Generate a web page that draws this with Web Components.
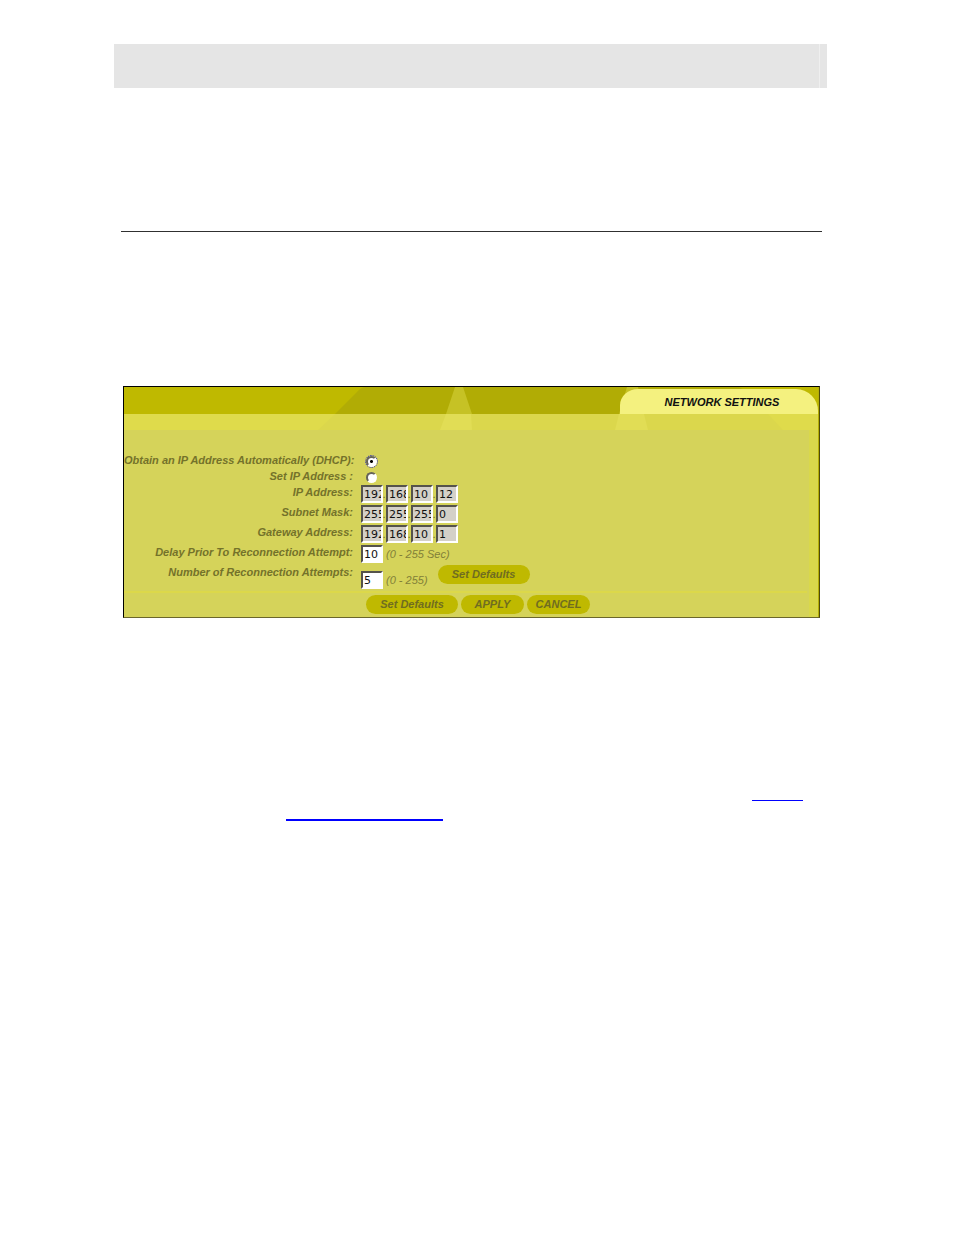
<!DOCTYPE html>
<html lang="en">
<head>
<meta charset="UTF-8">
<title>Network Settings</title>
<style>
body{margin:0;background:#fff;font-family:"Liberation Sans",Arial,sans-serif}
</style>
</head>
<body>
<manual-page>
<settings-panel heading="NETWORK SETTINGS">
<address-mode></address-mode>
<setting-row label="IP Address:" values="192.168.10.12" disabled></setting-row>
<setting-row label="Subnet Mask:" values="255.255.255.0" disabled></setting-row>
<setting-row label="Gateway Address:" values="192.168.10.1" disabled></setting-row>
<setting-row label="Delay Prior To Reconnection Attempt:" values="10" hint="(0 - 255 Sec)"></setting-row>
<setting-row label="Number of Reconnection Attempts:" values="5" hint="(0 - 255)" tall>
<pill-button wide>Set Defaults</pill-button>
</setting-row>
<pill-button slot="actions" wide>Set Defaults</pill-button>
<pill-button slot="actions">APPLY</pill-button>
<pill-button slot="actions">CANCEL</pill-button>
</settings-panel>
</manual-page>

<script>
const labelStyle = `
label{align-self:start;color:#74722a;font-size:11px;line-height:14px;font-weight:bold;font-style:italic;text-align:right;white-space:nowrap}
`;

class ManualPage extends HTMLElement{
constructor(){
super();
const shadow = this.attachShadow({mode:'open'});
shadow.innerHTML = `
<style>
:host{display:block;padding:44px 127px 44px 114px}
header{display:flex;justify-content:flex-end;height:44px;background:#e5e5e5}
header span{width:7px;border-left:1px solid #efefef}
hr{height:1px;margin:143px 5px 0 7px;border:0;background:#303030}
main{margin:154px 7px 0 9px}
nav{display:flex;flex-direction:column;margin:182px 24px 0 172px}
a{display:block}
.next{align-self:flex-end;width:51px;height:1px;background:#00f}
.section{width:157px;height:2px;margin-top:18px;background:#00f}
</style>
<header><span></span></header>
<hr>
<main><slot></slot></main>
<nav>
<a class="next" href="#next" aria-label="Next section"></a>
<a class="section" href="#section" aria-label="Section reference"></a>
</nav>
`;
}
}

class SettingsPanel extends HTMLElement{
constructor(){
super();
const shadow = this.attachShadow({mode:'open'});
shadow.innerHTML = `
<style>
:host{display:block;border:1px solid #000;border-right-color:#4f4b0c;border-bottom-color:#6a662c;background:#d5d35a}
.top{position:relative;height:43px;background:#dfdb4b}
svg{position:absolute;inset:0;width:100%;height:100%}
h1{position:absolute;right:0;top:2px;box-sizing:border-box;width:198px;height:25px;margin:0;padding-left:6px;border-radius:18px 22px 0 0 / 16px 22px 0 0;background:#f4f17f;color:#111;font-size:11px;line-height:26px;font-style:italic;text-align:center}
.body{border-right:9px solid #d9d84b}
.edge{border-right:1px solid #b5ae08}
form{display:block;padding-top:23px}
.line{height:2px;margin-right:2px;background:#dcd84a}
.actions{display:flex;gap:3px;height:22px;padding:2px 0 0 242px}
</style>
<div class="edge">
<div class="top">
<svg viewBox="0 0 694 43" preserveAspectRatio="none" aria-hidden="true">
<path fill="#bfb900" d="M0 0h694v27H0z"/>
<path fill="#b1ac05" d="M211 27 233 5Q237 0 242 0H615Q628 6 644 27z"/>
<path fill="#dbd74c" d="M211 27H644L659 43H194z"/>
<path fill="#c6c225" d="M331 0h8l9 27h-26zM503 0h11l6 27h-25z"/>
<path fill="#e1dd55" d="M322 27h25l1 16h-32zM495 27h25l4 16h-33z"/>
</svg>
<h1></h1>
</div>
<div class="body">
<form><slot></slot></form>
<div class="line"></div>
<div class="actions"><slot name="actions"></slot></div>
</div>
</div>
`;
shadow.querySelector('h1').textContent = this.getAttribute('heading');
}
}

class AddressMode extends HTMLElement{
constructor(){
super();
const shadow = this.attachShadow({mode:'open'});
shadow.innerHTML = `
<style>
:host{display:grid;grid-template-columns:229px auto;grid-auto-rows:16px;column-gap:13px;justify-content:start;align-items:center}
${labelStyle}
input{appearance:none;box-sizing:border-box;width:11px;height:11px;margin:0;border:2px solid;border-color:#65635a #fff #fff #65635a;border-radius:50%;background:#fff}
input:checked{background:radial-gradient(circle,#000 0 1px,#fff 2px);outline:1px dotted #2020c0}
</style>
<label for="dhcp">Obtain an IP Address Automatically (DHCP):</label>
<input type="radio" id="dhcp" name="mode" checked>
<label for="static">Set IP Address :</label>
<input type="radio" id="static" name="mode">
`;
}
}

class SettingRow extends HTMLElement{
constructor(){
super();
const shadow = this.attachShadow({mode:'open'});
const label = this.getAttribute('label');
const off = this.hasAttribute('disabled') ? 'disabled' : '';
const inputs = this.getAttribute('values').split('.').map((value, i) =>
`<input type="text" ${i ? `aria-label="${label} ${i + 1}"` : 'id="first"'} value="${value}" ${off}>`
).join('<i>.</i>');
shadow.innerHTML = `
<style>
:host{display:flex;height:20px}
:host([tall]){height:26px}
${labelStyle}
label{width:229px;margin-right:8px}
.fields{display:flex;align-self:flex-start}
:host([tall]) .fields{align-self:flex-end;padding-bottom:2px}
input{box-sizing:border-box;width:22px;height:18px;margin:0;padding:0 0 0 1px;border:2px solid;border-color:#55534c #fff #fff #55534c;border-radius:0;background:#fff;color:#111;font:11px "DejaVu Sans",sans-serif}
input:disabled{background:#d4d0c8}
i{width:3px;color:#74722a;font-size:11px;line-height:18px}
.hint{margin-left:3px;color:#828038;font-size:11px;line-height:18px;font-style:italic;white-space:nowrap}
slot{display:block;margin-left:10px}
</style>
<label for="first">${label}</label>
<div class="fields">${inputs}<span class="hint">${this.getAttribute('hint') || ''}</span></div>
<slot></slot>
`;
}
}

class PillButton extends HTMLElement{
constructor(){
super();
const shadow = this.attachShadow({mode:'open'});
shadow.innerHTML = `
<style>
:host{display:block;width:63px}
:host([wide]){width:92px}
button{display:block;width:100%;height:19px;margin:0;padding:0;border:0;border-radius:10px;background:#bfb900;color:#706d20;font:italic bold 11px/19px "Liberation Sans",Arial,sans-serif;white-space:nowrap}
</style>
<button type="button"><slot></slot></button>
`;
}
}

customElements.define('manual-page', ManualPage);
customElements.define('settings-panel', SettingsPanel);
customElements.define('address-mode', AddressMode);
customElements.define('setting-row', SettingRow);
customElements.define('pill-button', PillButton);
</script>
</body>
</html>
